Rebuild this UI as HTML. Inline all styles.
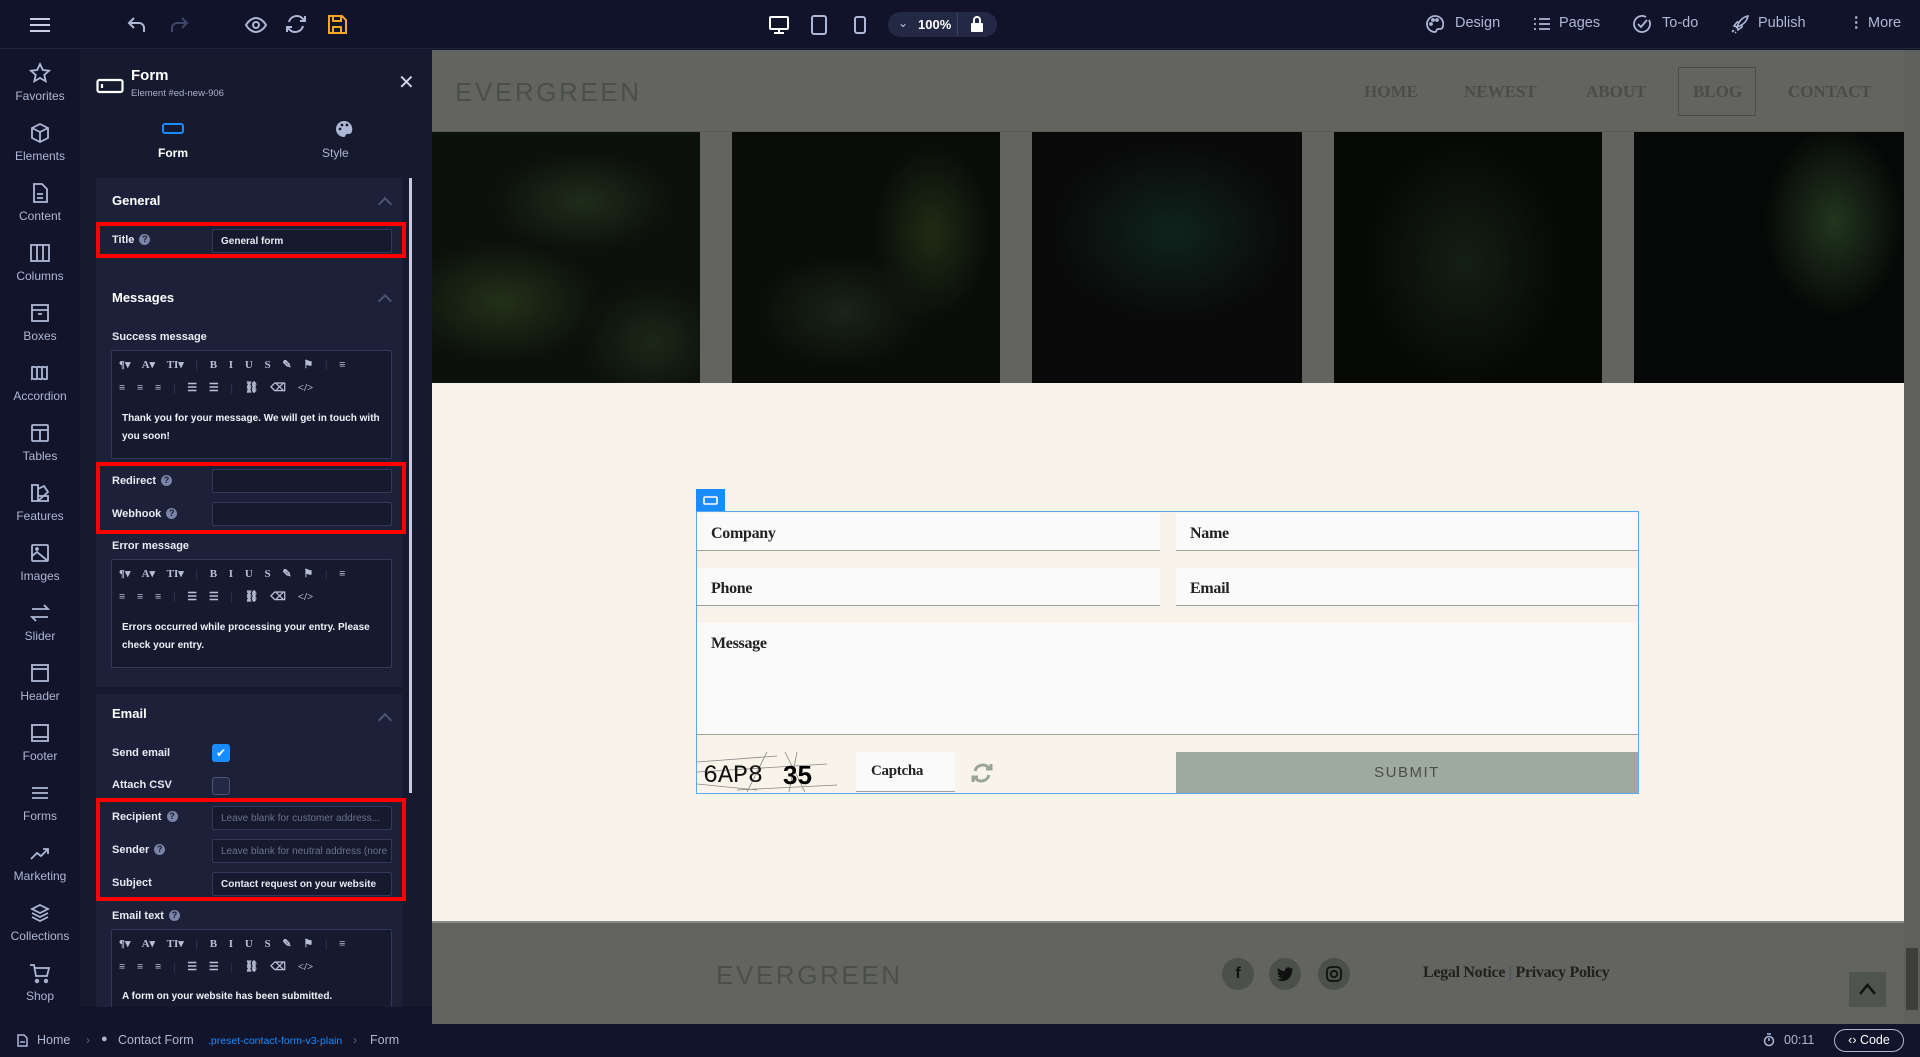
<!DOCTYPE html>
<html><head><meta charset="utf-8"><style>
*{box-sizing:border-box;margin:0;padding:0}
body{width:1920px;height:1057px;overflow:hidden;background:#11142a;font-family:"Liberation Sans",sans-serif;position:relative;color:#fff}
.a{position:absolute}
.top{left:0;top:0;width:1920px;height:49px;background:#10132a;border-bottom:1px solid #20243d}
.tb{color:#aeb8d6;font-size:14.5px;top:15px}
.side{left:0;top:50px;width:80px;height:974px;background:#11142a}
.si{width:80px;text-align:center;color:#aeb8d6;font-size:12px}
.si svg{display:block;margin:0 auto 5px}
.panel{left:80px;top:50px;width:352px;height:974px;background:#161a2f}
.sec{background:#1c2039;left:16px;width:306px}
.lbl{font-size:11px;color:#e8eaf2;font-weight:bold}
.inp{background:#161a2f;border:1px solid #323858;border-radius:2px;height:24px;font-size:10px;padding:6px 8px;color:#e8eaf2;font-weight:bold;white-space:nowrap;overflow:hidden}
.ph{color:#6a718e;font-weight:normal}
.red{border:4px solid #f00}
.ed{background:#161a2f;border:1px solid #323858;border-radius:2px;left:31px;width:281px}
.tool{font-family:"Liberation Serif",serif;font-size:11px;color:#b9bfd6;font-weight:bold;white-space:nowrap;word-spacing:9px}
.et{font-size:10px;color:#eef0f6;font-weight:bold;line-height:18px;left:10px;width:260px}
.hd{font-size:13px;font-weight:bold;color:#fff}
.chev{width:10px;height:10px;border-left:2px solid #4b5273;border-top:2px solid #4b5273;transform:rotate(45deg)}
.q{display:inline-block;width:11px;height:11px;border-radius:50%;background:#7a84a6;color:#161a2f;font-size:9px;text-align:center;line-height:11px;margin-left:5px;vertical-align:1px}
.serif{font-family:"Liberation Serif",serif}
.fi{background:#fafafa;border-bottom:1.5px solid #9aa59a;font-family:"Liberation Serif",serif;font-size:16px;color:#222;padding:12px 14px;font-weight:bold;letter-spacing:-.3px}
.img{top:132px;height:251px}
.nav{font-family:"Liberation Serif",serif;font-weight:bold;font-size:17px;color:#4a4d47;top:82px}
.logo{font-size:26px;letter-spacing:2.6px;color:#4a4f48}
</style></head><body>

<div class="a top">
 <svg class="a" style="left:28px;top:16px" width="24" height="18"><path d="M2 3h20M2 9h20M2 15h20" stroke="#c8cfe6" stroke-width="2"/></svg>
 <svg class="a" style="left:126px;top:14px" width="22" height="22" fill="none" stroke="#aeb8d6" stroke-width="2"><path d="M8 4L3 9l5 5M3 9h10a5 5 0 015 5v4"/></svg>
 <svg class="a" style="left:168px;top:14px" width="22" height="22" fill="none" stroke="#3f4768" stroke-width="2"><path d="M14 4l5 5-5 5M19 9H9a5 5 0 00-5 5v4"/></svg>
 <svg class="a" style="left:244px;top:14px" width="24" height="22" fill="none" stroke="#aeb8d6" stroke-width="2"><path d="M2 11c3-5 7-7 10-7s7 2 10 7c-3 5-7 7-10 7s-7-2-10-7z"/><circle cx="12" cy="11" r="3"/></svg>
 <svg class="a" style="left:285px;top:13px" width="22" height="22" fill="none" stroke="#aeb8d6" stroke-width="2"><path d="M4 9a8 8 0 0114-3l2 2M20 3v5h-5M18 13a8 8 0 01-14 3l-2-2M2 19v-5h5"/></svg>
 <svg class="a" style="left:326px;top:13px" width="22" height="22" fill="none" stroke="#f5a623" stroke-width="2"><path d="M3 3h13l4 4v13H3z"/><path d="M7 3v5h8V3M7 20v-6h8v6"/></svg>
 <svg class="a" style="left:768px;top:15px" width="22" height="20" fill="none" stroke="#fff" stroke-width="2"><rect x="2" y="2" width="18" height="12" rx="1"/><path d="M11 14v4M6 18h10"/></svg>
 <svg class="a" style="left:810px;top:14px" width="18" height="22" fill="none" stroke="#aeb8d6" stroke-width="2"><rect x="2" y="2" width="14" height="18" rx="2"/></svg>
 <svg class="a" style="left:853px;top:15px" width="14" height="20" fill="none" stroke="#aeb8d6" stroke-width="2"><rect x="2" y="2" width="10" height="16" rx="2"/></svg>
 <div class="a" style="left:888px;top:12px;width:109px;height:25px;border-radius:13px;background:#232944"></div>
 <div class="a" style="left:898px;top:16px;font-size:12px;color:#c8cfe6">⌄</div>
 <div class="a" style="left:918px;top:17px;font-size:13px;font-weight:bold;color:#fff">100%</div>
 <div class="a" style="left:957px;top:13px;width:1px;height:23px;background:#3a4060"></div>
 <svg class="a" style="left:970px;top:15px" width="14" height="18" fill="#fff"><path d="M4 8V5a3 3 0 016 0v3" stroke="#fff" stroke-width="2" fill="none"/><rect x="1" y="8" width="12" height="9" rx="1"/></svg>
 <svg class="a" style="left:1426px;top:15px" width="18" height="18" fill="none" stroke="#aeb8d6" stroke-width="1.8"><path d="M9 1a8 8 0 100 16c2 0 1-3 3-3h2a3 3 0 003-3A8 8 0 009 1z"/><circle cx="5" cy="9" r="1"/><circle cx="7" cy="5" r="1"/><circle cx="11" cy="5" r="1"/></svg>
 <div class="a tb" style="left:1455px">Design</div>
 <svg class="a" style="left:1533px;top:17px" width="18" height="14" stroke="#aeb8d6" stroke-width="1.8"><path d="M1 2h2M6 2h11M1 7h2M6 7h11M1 12h2M6 12h11"/></svg>
 <div class="a tb" style="left:1559px">Pages</div>
 <svg class="a" style="left:1632px;top:14px" width="20" height="20" fill="none" stroke="#aeb8d6" stroke-width="1.8"><path d="M17 6a8 8 0 11-3-3"/><path d="M6 10l3 3 6-7"/></svg>
 <div class="a tb" style="left:1662px">To-do</div>
 <svg class="a" style="left:1730px;top:14px" width="20" height="20" fill="none" stroke="#aeb8d6" stroke-width="1.6"><path d="M7 13c2-6 6-10 11-11-1 5-5 9-11 11zM7 13l-3-1 3-4 3 0M7 13l1 3 4-3 0-3M4 16l-2 2M6 18l-1 1"/></svg>
 <div class="a tb" style="left:1758px">Publish</div>
 <div class="a tb" style="left:1849px;font-weight:bold">⋮</div>
 <div class="a tb" style="left:1868px">More</div>
</div>

<div class="a side">
 <div class="a si" style="top:12px"><svg width="22" height="22" fill="none" stroke="#aeb8d6" stroke-width="1.8"><path d="M11 2l2.8 6 6.2.7-4.7 4.2 1.4 6.3L11 16l-5.7 3.2 1.4-6.3L2 8.7 8.2 8z"/></svg>Favorites</div>
 <div class="a si" style="top:72px"><svg width="22" height="22" fill="none" stroke="#aeb8d6" stroke-width="1.8"><path d="M11 2l8 4v10l-8 4-8-4V6zM3 6l8 4 8-4M11 10v10"/></svg>Elements</div>
 <div class="a si" style="top:132px"><svg width="22" height="22" fill="none" stroke="#aeb8d6" stroke-width="1.8"><path d="M5 2h8l5 5v13H5zM8 12h6M8 16h6"/></svg>Content</div>
 <div class="a si" style="top:192px"><svg width="22" height="22" fill="none" stroke="#aeb8d6" stroke-width="1.8"><rect x="2" y="3" width="18" height="16"/><path d="M8 3v16M14 3v16"/></svg>Columns</div>
 <div class="a si" style="top:252px"><svg width="22" height="22" fill="none" stroke="#aeb8d6" stroke-width="1.8"><rect x="3" y="3" width="16" height="16"/><path d="M3 8h16M9 12h4"/></svg>Boxes</div>
 <div class="a si" style="top:312px"><svg width="22" height="22" fill="none" stroke="#aeb8d6" stroke-width="1.8"><path d="M3 5c2-1 3 1 5 0s3 1 5 0 3 1 5 0v12c-2 1-3-1-5 0s-3-1-5 0-3-1-5 0zM8 5v12M13 5v12"/></svg>Accordion</div>
 <div class="a si" style="top:372px"><svg width="22" height="22" fill="none" stroke="#aeb8d6" stroke-width="1.8"><rect x="3" y="3" width="16" height="16" rx="1"/><path d="M3 8h16M11 8v11"/></svg>Tables</div>
 <div class="a si" style="top:432px"><svg width="22" height="22" fill="none" stroke="#aeb8d6" stroke-width="1.8"><path d="M3 3h6v16H3zM9 7l6-3 4 6-10 9M9 14h10v5H9"/></svg>Features</div>
 <div class="a si" style="top:492px"><svg width="22" height="22" fill="none" stroke="#aeb8d6" stroke-width="1.8"><rect x="3" y="3" width="16" height="16" rx="1"/><path d="M3 14l5-4 11 9"/><circle cx="8" cy="7" r="1"/></svg>Images</div>
 <div class="a si" style="top:552px"><svg width="22" height="22" fill="none" stroke="#aeb8d6" stroke-width="1.8"><path d="M3 7h16l-4-4M19 15H3l4 4"/></svg>Slider</div>
 <div class="a si" style="top:612px"><svg width="22" height="22" fill="none" stroke="#aeb8d6" stroke-width="1.8"><rect x="3" y="3" width="16" height="16"/><path d="M3 7h16"/></svg>Header</div>
 <div class="a si" style="top:672px"><svg width="22" height="22" fill="none" stroke="#aeb8d6" stroke-width="1.8"><rect x="3" y="3" width="16" height="16"/><path d="M3 15h16"/></svg>Footer</div>
 <div class="a si" style="top:732px"><svg width="22" height="22" fill="none" stroke="#aeb8d6" stroke-width="1.8"><path d="M3 6h16M3 11h16M3 16h16"/></svg>Forms</div>
 <div class="a si" style="top:792px"><svg width="22" height="22" fill="none" stroke="#aeb8d6" stroke-width="1.8"><path d="M2 17l6-6 4 3 7-7M14 7h5v5"/></svg>Marketing</div>
 <div class="a si" style="top:852px"><svg width="22" height="22" fill="none" stroke="#aeb8d6" stroke-width="1.8"><path d="M11 3l8 4-8 4-8-4zM3 11l8 4 8-4M3 15l8 4 8-4"/></svg>Collections</div>
 <div class="a si" style="top:912px"><svg width="22" height="22" fill="none" stroke="#aeb8d6" stroke-width="1.8"><path d="M1 3h4l2 11h11l2-8H6"/><circle cx="8" cy="19" r="1.3"/><circle cx="17" cy="19" r="1.3"/></svg>Shop</div>
</div>

<div class="a panel">
 <svg class="a" style="left:16px;top:28px" width="28" height="16" fill="none" stroke="#fff" stroke-width="2.2"><rect x="1.5" y="2" width="25" height="12" rx="2"/><path d="M6 6v4"/></svg>
 <div class="a" style="left:51px;top:17px;font-size:15px;font-weight:bold">Form</div>
 <div class="a" style="left:51px;top:38px;font-size:9.5px;color:#a9b0c8">Element #ed-new-906</div>
 <div class="a" style="left:318px;top:20px;font-size:20px;color:#cfd4e4">✕</div>
 <svg class="a" style="left:82px;top:73px" width="22" height="12" fill="none" stroke="#1a8cff" stroke-width="2"><rect x="1" y="1" width="20" height="9" rx="2"/></svg>
 <div class="a" style="left:78px;top:96px;font-size:12px;font-weight:bold">Form</div>
 <svg class="a" style="left:255px;top:70px" width="18" height="18" fill="#aeb8d6"><path d="M9 1a8 8 0 100 16c2 0 1-3 3-3h2a3 3 0 003-3A8 8 0 009 1z"/><circle cx="5" cy="9" r="1.4" fill="#161a2f"/><circle cx="7" cy="5" r="1.4" fill="#161a2f"/><circle cx="12" cy="5" r="1.4" fill="#161a2f"/></svg>
 <div class="a" style="left:242px;top:96px;font-size:12px;color:#aeb8d6">Style</div>
 <div class="a" style="left:329px;top:128px;width:3px;height:615px;background:#c8cbe0"></div>

 <div class="a sec" style="top:128px;height:142px"></div>
 <div class="a hd" style="left:32px;top:143px">General</div>
 <div class="a chev" style="left:300px;top:149px"></div>
 <div class="a red" style="left:16px;top:172px;width:310px;height:36px"></div>
 <div class="a lbl" style="left:32px;top:184px">Title<span class="q">?</span></div>
 <div class="a inp" style="left:132px;top:179px;width:180px">General form</div>

 <div class="a sec" style="top:224px;height:413px"></div>
 <div class="a hd" style="left:32px;top:240px">Messages</div>
 <div class="a chev" style="left:300px;top:246px"></div>
 <div class="a lbl" style="left:32px;top:281px;font-weight:bold">Success message</div>
 <div class="a ed" style="top:300px;height:109px">
  <div class="a tool" style="left:7px;top:7px">¶▾ A▾ TI▾ <span style="color:#333a5a">|</span> B I U S ✎ ⚑ <span style="color:#333a5a">|</span> ≡</div>
  <div class="a tool" style="left:7px;top:30px">≡ ≡ ≡ <span style="color:#333a5a">|</span> ☰ ☰ <span style="color:#333a5a">|</span> ⛓ ⌫ &lt;/&gt;</div>
  <div class="a et" style="top:59px">Thank you for your message. We will get in touch with you soon!</div>
 </div>
 <div class="a red" style="left:16px;top:412px;width:310px;height:72px"></div>
 <div class="a lbl" style="left:32px;top:425px">Redirect<span class="q">?</span></div>
 <div class="a inp" style="left:132px;top:419px;width:180px"></div>
 <div class="a lbl" style="left:32px;top:458px">Webhook<span class="q">?</span></div>
 <div class="a inp" style="left:132px;top:452px;width:180px"></div>
 <div class="a lbl" style="left:32px;top:490px">Error message</div>
 <div class="a ed" style="top:509px;height:109px">
  <div class="a tool" style="left:7px;top:7px">¶▾ A▾ TI▾ <span style="color:#333a5a">|</span> B I U S ✎ ⚑ <span style="color:#333a5a">|</span> ≡</div>
  <div class="a tool" style="left:7px;top:30px">≡ ≡ ≡ <span style="color:#333a5a">|</span> ☰ ☰ <span style="color:#333a5a">|</span> ⛓ ⌫ &lt;/&gt;</div>
  <div class="a et" style="top:59px">Errors occurred while processing your entry. Please check your entry.</div>
 </div>

 <div class="a sec" style="top:644px;height:313px"></div>
 <div class="a hd" style="left:32px;top:656px">Email</div>
 <div class="a chev" style="left:300px;top:665px"></div>
 <div class="a lbl" style="left:32px;top:697px">Send email</div>
 <div class="a" style="left:132px;top:694px;width:18px;height:18px;border-radius:3px;background:#1a8cff;color:#fff;font-size:12px;text-align:center;line-height:18px">✔</div>
 <div class="a lbl" style="left:32px;top:729px">Attach CSV</div>
 <div class="a" style="left:132px;top:727px;width:18px;height:18px;border-radius:3px;border:1px solid #4b5273;background:#232944"></div>
 <div class="a red" style="left:16px;width:310px;height:103px;top:748px"></div>
 <div class="a lbl" style="left:32px;top:761px">Recipient<span class="q">?</span></div>
 <div class="a inp" style="left:132px;top:756px;width:180px"><span class="ph">Leave blank for customer address...</span></div>
 <div class="a lbl" style="left:32px;top:794px">Sender<span class="q">?</span></div>
 <div class="a inp" style="left:132px;top:789px;width:180px"><span class="ph">Leave blank for neutral address (nore</span></div>
 <div class="a lbl" style="left:32px;top:827px">Subject</div>
 <div class="a inp" style="left:132px;top:822px;width:180px">Contact request on your website</div>
 <div class="a lbl" style="left:32px;top:860px">Email text<span class="q">?</span></div>
 <div class="a ed" style="top:879px;height:80px;border-bottom:none">
  <div class="a tool" style="left:7px;top:7px">¶▾ A▾ TI▾ <span style="color:#333a5a">|</span> B I U S ✎ ⚑ <span style="color:#333a5a">|</span> ≡</div>
  <div class="a tool" style="left:7px;top:30px">≡ ≡ ≡ <span style="color:#333a5a">|</span> ☰ ☰ <span style="color:#333a5a">|</span> ⛓ ⌫ &lt;/&gt;</div>
  <div class="a et" style="top:58px">A form on your website has been submitted.</div>
 </div>
 <div class="a" style="left:0;top:957px;width:352px;height:17px;background:#11142a"></div>
</div>

<!-- canvas -->
<div class="a" style="left:432px;top:50px;width:1472px;height:974px;background:#f8f4ea"></div>
<div class="a" style="left:432px;top:50px;width:1472px;height:333px;background:#636360"></div>
<div class="a" style="left:432px;top:131px;width:1472px;height:1px;background:#5a5a57"></div>
<div class="a logo" style="left:455px;top:77px">EVERGREEN</div>
<div class="a nav" style="left:1364px">HOME</div>
<div class="a nav" style="left:1464px">NEWEST</div>
<div class="a nav" style="left:1586px">ABOUT</div>
<div class="a" style="left:1678px;top:67px;width:78px;height:49px;border:1px solid #4a4d47"></div>
<div class="a nav" style="left:1693px">BLOG</div>
<div class="a nav" style="left:1788px">CONTACT</div>

<div class="a img" style="left:432px;width:268px;background:radial-gradient(ellipse 100px 60px at 70px 170px,#223019,transparent),radial-gradient(ellipse 90px 50px at 150px 70px,#1f2c1a,transparent),radial-gradient(ellipse 70px 60px at 220px 210px,#1b2717,transparent),#0c110b"></div>
<div class="a img" style="left:732px;width:268px;background:radial-gradient(ellipse 60px 90px at 200px 100px,#1f2c15,transparent),radial-gradient(ellipse 90px 60px at 110px 180px,#1a2417,transparent),#090c08"></div>
<div class="a img" style="left:1032px;width:270px;background:radial-gradient(ellipse 120px 90px at 140px 100px,#0f231c,transparent),#0a0a0a"></div>
<div class="a img" style="left:1334px;width:268px;background:radial-gradient(ellipse 100px 120px at 130px 130px,#141f13,transparent),#070907"></div>
<div class="a img" style="left:1634px;width:270px;background:radial-gradient(ellipse 70px 95px at 200px 90px,#22361e,transparent),radial-gradient(ellipse 50px 40px at 60px 60px,#15211400,transparent),#060807"></div>

<!-- form -->
<div class="a" style="left:696px;top:489px;width:29px;height:23px;background:#1a8cff"></div>
<svg class="a" style="left:703px;top:496px" width="15" height="9" fill="none" stroke="#fff" stroke-width="1.6"><rect x="1" y="1" width="13" height="7" rx="1"/></svg>
<div class="a" style="left:696px;top:511px;width:943px;height:283px;border:1.5px solid #5aa8ee"></div>
<div class="a fi" style="left:697px;top:513px;width:463px;height:38px">Company</div>
<div class="a fi" style="left:1176px;top:513px;width:462px;height:38px">Name</div>
<div class="a fi" style="left:697px;top:568px;width:463px;height:38px">Phone</div>
<div class="a fi" style="left:1176px;top:568px;width:462px;height:38px">Email</div>
<div class="a fi" style="left:697px;top:623px;width:941px;height:112px">Message</div>
<svg class="a" style="left:697px;top:752px" width="141" height="40"><path d="M0 10l80-6M0 32l60 6M70 0l-20 40M88 0l20 40M40 38l100-5M100 0l-8 40M0 20l130-8" stroke="#888" stroke-width="0.8" fill="none"/><text x="6" y="30" font-family="Liberation Mono,monospace" font-size="25" fill="#111">6AP8</text><text x="86" y="32" font-family="Liberation Sans,sans-serif" font-weight="bold" font-size="26" fill="#000">35</text></svg>
<div class="a fi" style="left:856px;top:752px;width:99px;height:40px;font-size:15px;padding:11px 15px">Captcha</div>
<svg class="a" style="left:971px;top:762px" width="22" height="22" fill="none" stroke="#9aa59a" stroke-width="3"><path d="M4 9a8 8 0 0114-3M20 2v5h-5M18 13a8 8 0 01-14 3M2 20v-5h5"/></svg>
<div class="a" style="left:1176px;top:752px;width:462px;height:41px;background:#9faa9e;color:#4a4e4a;font-size:15px;letter-spacing:1.5px;text-align:center;line-height:41px">SUBMIT</div>

<!-- footer -->
<div class="a" style="left:432px;top:921px;width:1472px;height:103px;background:#636360;border-top:2px solid #8a8986"></div>
<div class="a logo" style="left:716px;top:960px">EVERGREEN</div>
<div class="a" style="left:1222px;top:958px;width:32px;height:32px;border-radius:50%;background:#4c504b;color:#111;text-align:center;line-height:32px;font-weight:bold;font-size:16px">f</div>
<div class="a" style="left:1269px;top:958px;width:32px;height:32px;border-radius:50%;background:#4c504b"><svg style="margin:9px 8px" width="16" height="14"><path d="M16 2c-1 .5-1.5.5-2 .5 1-.5 1.5-1.5 1.5-2-1 .5-1.5.7-2 .7A3.3 3.3 0 008 4C5 4 3 3 1 1c-1 2 0 4 1 5-.5 0-1 0-1.5-.5 0 2 1 3 3 3.5H1c1 1.5 2 2 4 2-1.5 1-3 1.5-5 1.5 7 4 15 0 15-9 1-.5 1.5-1 1-1.5z" fill="#111"/></svg></div>
<div class="a" style="left:1318px;top:958px;width:32px;height:32px;border-radius:50%;background:#4c504b"><svg style="margin:8px" width="16" height="16" fill="none" stroke="#111" stroke-width="1.8"><rect x="1" y="1" width="14" height="14" rx="4"/><circle cx="8" cy="8" r="3.2"/></svg></div>
<div class="a serif" style="left:1423px;top:964px;font-size:16px;color:#1f211f;font-weight:bold;letter-spacing:-.3px">Legal Notice <span style="color:#3a4e70;font-weight:normal">|</span> Privacy Policy</div>
<div class="a" style="left:1849px;top:972px;width:37px;height:35px;background:#4f544e"><svg style="margin:10px 9px" width="19" height="13" fill="none" stroke="#111" stroke-width="2.5"><path d="M2 12l7.5-9 7.5 9"/></svg></div>
<div class="a" style="left:1904px;top:50px;width:16px;height:974px;background:#5f5f5d"></div>
<div class="a" style="left:1906px;top:948px;width:12px;height:62px;background:#3e3e3c"></div>

<!-- bottom bar -->
<div class="a" style="left:0;top:1024px;width:1920px;height:33px;background:#11142a"></div>
<svg class="a" style="left:16px;top:1034px" width="12" height="13" fill="none" stroke="#aeb8d6" stroke-width="1.5"><path d="M2 1h6l3 3v8H2zM4 8h5"/></svg>
<div class="a" style="left:37px;top:1033px;font-size:12.5px;color:#aeb8d6">Home</div>
<div class="a" style="left:86px;top:1033px;font-size:12px;color:#5b6383">›</div>
<div class="a" style="left:101px;top:1033px;font-size:11px;color:#aeb8d6">●</div>
<div class="a" style="left:118px;top:1033px;font-size:12.5px;color:#aeb8d6">Contact Form</div>
<div class="a" style="left:208px;top:1035px;font-size:10.5px;color:#1a8cff">.preset-contact-form-v3-plain</div>
<div class="a" style="left:353px;top:1033px;font-size:12px;color:#5b6383">›</div>
<div class="a" style="left:370px;top:1033px;font-size:12.5px;color:#aeb8d6">Form</div>
<svg class="a" style="left:1763px;top:1033px" width="12" height="14" fill="none" stroke="#aeb8d6" stroke-width="1.5"><circle cx="6" cy="8" r="4.5"/><path d="M4 1h4M6 8V5"/></svg>
<div class="a" style="left:1784px;top:1033px;font-size:12.5px;color:#aeb8d6">00:11</div>
<div class="a" style="left:1834px;top:1029px;width:70px;height:23px;border:1px solid #aeb8d6;border-radius:12px;font-size:12.5px;color:#fff;text-align:center;line-height:21px">‹› Code</div>
</body></html>
